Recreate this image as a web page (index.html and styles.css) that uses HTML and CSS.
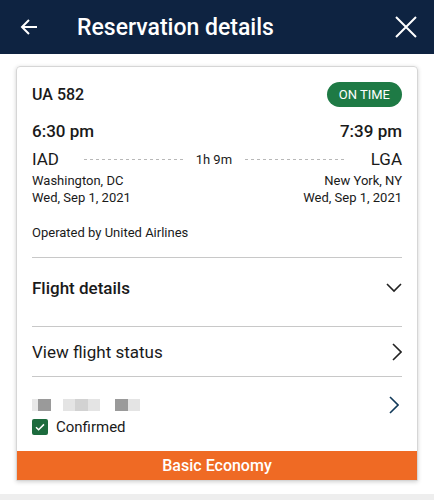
FILE: index.html
```html
<!DOCTYPE html>
<html lang="en">
<head>
    <meta charset="UTF-8">
    <title>Reservation details</title>
    <link rel="stylesheet" href="styles.css">
</head>
<body>
    <!-- Top bar -->
    <div class="topbar">
        <svg class="back" width="20" height="20" viewBox="0 0 20 20">
            <path d="M18 10H3M10 3L3 10l7 7" fill="none" stroke="#fff" stroke-width="2"/>
        </svg>
        <h1>Reservation details</h1>
        <svg class="close" width="24" height="24" viewBox="0 0 24 24">
            <path d="M2 2L22 22M22 2L2 22" fill="none" stroke="#fff" stroke-width="2"/>
        </svg>
    </div>

    <div class="page">
        <div class="card">
            <div class="card-body">
                <div class="row">
                    <span class="flight-no">UA 582</span>
                    <span class="badge">ON TIME</span>
                </div>

                <div class="row times">
                    <span>6:30 pm</span>
                    <span>7:39 pm</span>
                </div>

                <div class="route">
                    <span class="code">IAD</span>
                    <span class="dash dash-left"></span>
                    <span class="duration">1h 9m</span>
                    <span class="dash dash-right"></span>
                    <span class="code">LGA</span>
                </div>

                <div class="row small">
                    <div>Washington, DC<br>Wed, Sep 1, 2021</div>
                    <div class="right">New York, NY<br>Wed, Sep 1, 2021</div>
                </div>

                <p class="operator">Operated by United Airlines</p>

                <div class="item details">
                    <span>Flight details</span>
                    <svg width="16" height="10" viewBox="0 0 16 10">
                        <path d="M1 1l7 7 7-7" fill="none" stroke="#222" stroke-width="1.6"/>
                    </svg>
                </div>

                <div class="item status">
                    <span>View flight status</span>
                    <svg width="10" height="18" viewBox="0 0 10 18">
                        <path d="M1 1l8 8-8 8" fill="none" stroke="#222" stroke-width="1.6"/>
                    </svg>
                </div>

                <div class="item traveler">
                    <div>
                        <div class="blur">
                            <i class="f"></i><i class="d"></i>
                            <i class="gap"></i>
                            <i class="l"></i><i class="m"></i><i class="l"></i>
                            <i class="gap2"></i>
                            <i class="d"></i><i class="l"></i>
                        </div>
                        <div class="confirmed">
                            <svg width="16" height="16" viewBox="0 0 16 16">
                                <rect width="16" height="16" rx="2" fill="#1c6b3d"/>
                                <path d="M4 8.2l2.6 2.6L12 5.4" fill="none" stroke="#fff" stroke-width="1.5"/>
                            </svg>
                            Confirmed
                        </div>
                    </div>
                    <svg class="go" width="10" height="18" viewBox="0 0 10 18">
                        <path d="M1 1l8 8-8 8" fill="none" stroke="#123a5a" stroke-width="1.6"/>
                    </svg>
                </div>
            </div>
            <div class="fare">Basic Economy</div>
        </div>
    </div>
    <div class="bottom"></div>
</body>
</html>
```

FILE: styles.css
```css
/* Basic styling */
body {
    margin: 0;
    font-family: Roboto, 'Noto Sans', sans-serif;
    color: #1a1a1a;
    background: #fff;
}

.topbar {
    height: 54px;
    background: #0e2341;
    display: flex;
    align-items: center;
    padding: 0 16px 0 19px;
}

.topbar h1 {
    flex: 1;
    margin: 0 0 0 38px;
    color: #fff;
    font-size: 23px;
    font-weight: 500;
}

.page {
    padding: 12px 16px 13px;
}

.card {
    border: 1px solid #d6d6d6;
    border-radius: 4px 4px 0 0;
    box-shadow: 0 1px 4px rgba(0,0,0,0.18);
}

.card-body {
    padding: 15px 15px 0;
}

.row {
    display: flex;
    justify-content: space-between;
    align-items: center;
}

.flight-no {
    font-size: 16px;
    font-weight: 500;
}

.badge {
    background: #1e7a45;
    color: #fff;
    font-size: 13px;
    line-height: 15px;
    padding: 5px 12px;
    border-radius: 13px;
}

.times {
    margin-top: 14px;
    font-size: 17px;
    font-weight: 500;
}

.route {
    display: flex;
    align-items: center;
    margin-top: 8px;
    font-size: 17px;
}

.dash {
    flex: 1;
    height: 1px;
    background: repeating-linear-gradient(90deg, #b8b8b8 0 3px, transparent 3px 6px);
}

.dash-left {
    margin: 0 13px 0 25px;
}

.dash-right {
    margin: 0 27px 0 13px;
}

.duration {
    font-size: 13px;
}

.small {
    align-items: flex-start;
    margin-top: 3px;
    font-size: 13px;
    line-height: 17px;
}

.right {
    text-align: right;
}

.operator {
    margin: 19px 0 0;
    font-size: 13px;
    padding-bottom: 17px;
    border-bottom: 1px solid #c8c8c8;
}

.item {
    display: flex;
    justify-content: space-between;
    align-items: center;
    border-bottom: 1px solid #c8c8c8;
}

.details {
    height: 60px;
    padding-bottom: 8px;
    font-size: 17px;
    font-weight: 500;
}

.status {
    height: 49px;
    font-size: 17px;
}

.traveler {
    align-items: flex-start;
    border-bottom: none;
    padding: 22px 3px 15px 0;
}

.go {
    margin-top: -3px;
}

.blur {
    display: flex;
    height: 12px;
}

.blur i {
    width: 13px;
    height: 12px;
}

.blur .f { width: 6px; background: #e8e8e8; }
.blur .d { background: #9a9a9a; }
.blur .m { background: #d2d2d2; }
.blur .l { width: 12px; background: #e4e4e4; }
.blur .gap { width: 12px; }
.blur .gap2 { width: 15px; }

.confirmed {
    display: flex;
    align-items: center;
    gap: 8px;
    margin-top: 7px;
    font-size: 15px;
}

.fare {
    background: #ef6a24;
    color: #fff;
    text-align: center;
    font-size: 16px;
    font-weight: 500;
    line-height: 19px;
    padding: 5px 0;
}

.bottom {
    height: 10px;
    background: #eeeeee;
}
```
